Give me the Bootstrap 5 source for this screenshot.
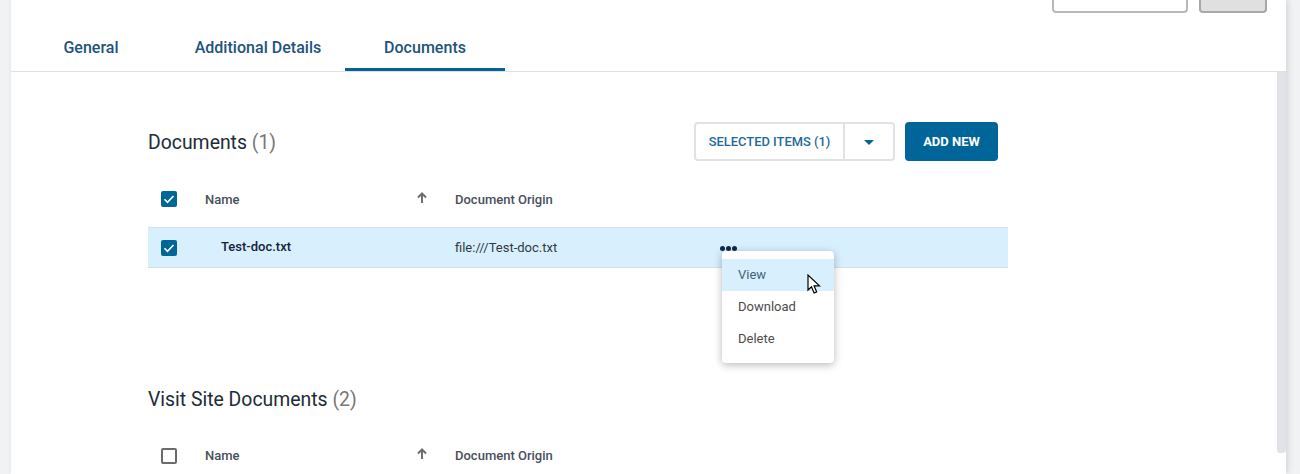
<!DOCTYPE html>
<html lang="en">
<head>
<meta charset="utf-8">
<title>Documents</title>
<link href="https://cdn.jsdelivr.net/npm/bootstrap@5.3.0/dist/css/bootstrap.min.css" rel="stylesheet">
<style>
html,body{height:474px;overflow:hidden;background:#f1f2f4;font-family:Roboto,"Liberation Sans",sans-serif;}
.shell{position:relative;width:1275px;height:474px;margin-left:11px;background:#fff;box-shadow:2px 0 6px rgba(0,0,0,.12);overflow:hidden;}
.top-actions{height:13px;padding-right:19px;gap:11px;}
.top-ghost,.top-grey{display:block;height:13px;border:2px solid #b9b9b9;border-top:0;border-radius:0 0 4px 4px;background:#fff;padding:0;}
.top-ghost{width:136px;}
.top-grey{width:68px;background:#e0e0e0;border-color:#a8a8a8;}
.tabbar{height:59px;border-bottom:1px solid #e0e0e0;gap:7px;flex-wrap:nowrap;}
.tab-item{display:block;width:160px;height:58px;text-align:center;color:#22537c;font-size:16px;font-weight:500;line-height:20px;padding-top:25px;text-decoration:none;letter-spacing:.03px;}
.tab-item.on{border-bottom:3px solid #006699;}
.doc-area{position:relative;padding:50px 0 0 137px;}
.doc-inner{width:860px;}
.sect-head{height:39px;padding-right:10px;}
.sect-title{font-size:19.4px;line-height:26px;color:#212b36;margin:2px 0 0;font-weight:400;}
.sect-title span{color:#777;}
.split-box{display:flex;height:39px;border:2px solid #e1e2e8;border-radius:4px;background:#fff;margin-right:10px;}
.split-main{width:147px;border:0;background:none;padding:0;font-size:12.900px;font-weight:500;color:#1d6a9c;}
.split-arrow{width:50px;border:0;border-left:2px solid #e1e2e8;background:none;padding:2px 0 0;display:flex;align-items:center;justify-content:center;}
.caret-shape{width:0;height:0;border-left:5px solid transparent;border-right:5px solid transparent;border-top:5px solid #006699;}
.add-new{width:93px;height:39px;background:#006699;border:0;border-radius:4px;color:#fff;font-size:13px;font-weight:700;padding:0;}
.grid-row{display:flex;align-items:center;font-size:13px;color:#47505c;}
.grid-head{height:39px;margin-top:19px;font-weight:500;}
.grid-body{height:41px;margin-top:8px;background:#d8effd;border-top:1px solid #d3e3ee;border-bottom:1px solid #d3dfe6;}
.cell-check{width:57px;padding-left:13px;display:flex;align-items:center;}
.cell-name{width:250px;display:flex;justify-content:space-between;align-items:center;padding-right:27px;}
.cell-origin{width:265px;}
.tick-box{display:block;width:16px;height:16px;border-radius:2px;background:#006699;}
.grid-head .tick-box{margin-top:-2px;}
.tick-empty{display:block;width:16px;height:16px;border:2px solid #6b6b6b;border-radius:2px;background:#fff;}
.arrow-up{margin-top:-3px;}
.doc-name{padding-left:16px;padding-bottom:2px;font-weight:500;color:#14233a;}
.origin-val{color:#2f3a45;font-weight:400;}
.dots-mark{display:flex;gap:1px;margin-top:2px;}
.dots-mark i{display:block;width:5px;height:5px;border-radius:50%;background:#0c2a4d;}
.more-menu{position:absolute;left:711px;top:179px;width:112px;height:112px;padding:8px 0;background:#fff;border-radius:4px;box-shadow:0 2px 8px rgba(0,0,0,.28);}
.more-menu a{display:block;height:32px;line-height:31px;padding-left:16px;font-size:13px;color:#4d4d4d;text-decoration:none;}
.more-menu a.hot{background:#d8effd;color:#47617c;}
.pointer-mark{position:absolute;left:796px;top:202px;}
.gap-sect{height:118px;}
.sect-two{height:26px;}
.grid-head-two{height:39px;margin-top:24px;}
.rail{position:absolute;right:0;top:72px;width:9px;height:381px;background:#e2e3e9;border-radius:0 0 3px 3px;}
</style>
</head>
<body>
<div class="shell">
  <div class="d-flex justify-content-end top-actions">
    <button class="top-ghost" type="button" aria-label="Cancel"></button>
    <button class="top-grey" type="button" aria-label="Save"></button>
  </div>
  <nav class="nav tabbar">
    <a class="tab-item" href="#">General</a>
    <a class="tab-item" href="#">Additional Details</a>
    <a class="tab-item on" href="#">Documents</a>
  </nav>
  <div class="rail"></div>
  <div class="doc-area">
    <div class="doc-inner">
      <div class="d-flex align-items-center justify-content-between sect-head">
        <h2 class="sect-title">Documents <span>(1)</span></h2>
        <div class="d-flex">
          <div class="split-box">
            <button class="split-main" type="button">SELECTED ITEMS (1)</button>
            <button class="split-arrow" type="button" aria-label="More"><span class="caret-shape"></span></button>
          </div>
          <button class="add-new" type="button">ADD NEW</button>
        </div>
      </div>
      <div class="grid-row grid-head">
        <div class="cell-check"><svg class="tick-box" viewBox="0 0 16 16"><path d="M3.500 8.300l3 3 6-6.300" fill="none" stroke="#fff" stroke-width="1.600"/></svg></div>
        <div class="cell-name"><span>Name</span><svg class="arrow-up" width="12" height="12" viewBox="0 0 12 12"><path d="M6 11V2M2 5.500L6 1.500l4 4" fill="none" stroke="#6e6e6e" stroke-width="2"/></svg></div>
        <div class="cell-origin">Document Origin</div>
      </div>
      <div class="grid-row grid-body">
        <div class="cell-check"><svg class="tick-box" viewBox="0 0 16 16"><path d="M3.500 8.300l3 3 6-6.300" fill="none" stroke="#fff" stroke-width="1.600"/></svg></div>
        <div class="cell-name"><span class="doc-name">Test-doc.txt</span></div>
        <div class="cell-origin origin-val">file:///Test-doc.txt</div>
        <div class="dots-mark"><i></i><i></i><i></i></div>
      </div>
      <div class="gap-sect"></div>
      <div class="d-flex align-items-center sect-two">
        <h2 class="sect-title">Visit Site Documents <span>(2)</span></h2>
      </div>
      <div class="grid-row grid-head grid-head-two">
        <div class="cell-check"><span class="tick-empty"></span></div>
        <div class="cell-name"><span>Name</span><svg class="arrow-up" width="12" height="12" viewBox="0 0 12 12"><path d="M6 11V2M2 5.500L6 1.500l4 4" fill="none" stroke="#6e6e6e" stroke-width="2"/></svg></div>
        <div class="cell-origin">Document Origin</div>
      </div>
    </div>
    <div class="more-menu">
      <a class="hot" href="#">View</a>
      <a href="#">Download</a>
      <a href="#">Delete</a>
    </div>
    <svg class="pointer-mark" width="14" height="21" viewBox="0 0 14 21"><path d="M1 1v15l3.500-3.300 2.600 6.300 2.600-1.100-2.600-6.100H12.500z" fill="#fff" stroke="#000" stroke-width="1.200"/></svg>
  </div>
</div>
<script src="https://cdn.jsdelivr.net/npm/bootstrap@5.3.0/dist/js/bootstrap.bundle.min.js"></script>
</body>
</html>
